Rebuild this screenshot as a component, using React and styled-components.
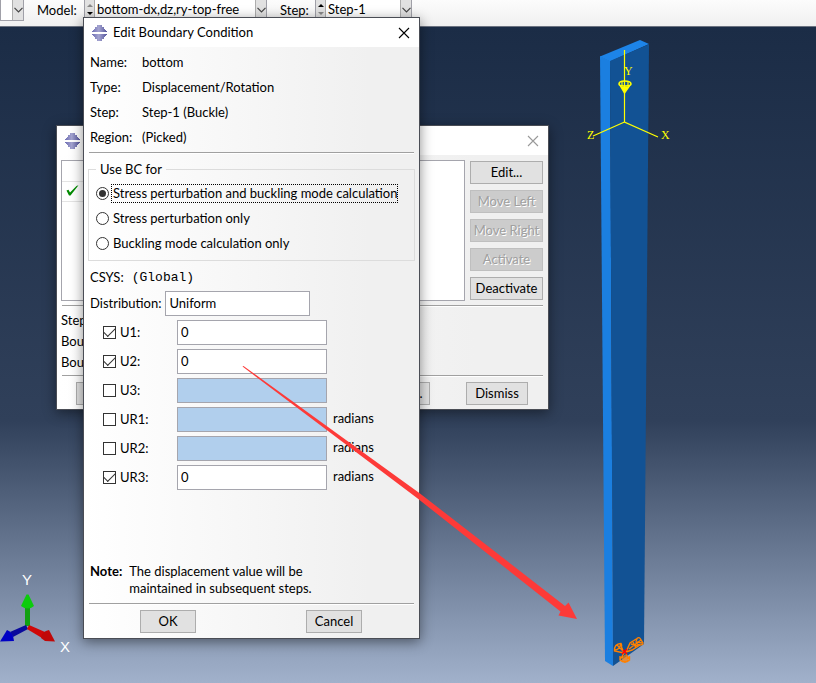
import React from "react";
import styled, { createGlobalStyle } from "styled-components";

const GlobalStyle = createGlobalStyle`
  * {
    box-sizing: border-box;
  }

  body {
    margin: 0;
    font-family: Lato, "Open Sans", sans-serif;
    font-size: 13px;
    line-height: 17px;
    color: #000;
  }

  button, input, select {
    font: inherit;
    color: inherit;
    border-radius: 0;
  }
`;

const Desktop = styled.div`
  position: relative;
  display: flex;
  flex-direction: column;
  min-height: 100vh;
  overflow: hidden;
`;

/* ---------- context bar ---------- */

const ContextBar = styled.header`
  display: flex;
  align-items: flex-start;
  height: 27px;
  background: linear-gradient(#fcfcfc, #f0f0f0);
  border-bottom: 1px solid #6b7280;
`;

const BarGroup = styled.div`
  display: flex;
  align-items: center;
  height: 22px;
  margin-top: -1px;
`;

const BarLabel = styled.label`
  width: ${({ $width }) => $width}px;
  padding-left: 13px;
`;

const Combo = styled.div`
  display: flex;
  align-items: stretch;
  width: ${({ $width }) => $width}px;
  height: 22px;
  background: #fff;
  border: 1px solid #a0a0a8;
  border-top: 0;
`;

const ComboSelect = styled.select`
  flex: 1;
  min-width: 0;
  padding: 0 2px;
  appearance: none;
  background: transparent;
  border: 0;
`;

const ComboArrow = styled.span`
  display: flex;
  align-items: center;
  justify-content: center;
  width: 11px;
  background: #e1e1e1;
  border-left: 1px solid #adadad;
`;

const Spinner = styled.span`
  display: flex;
  flex-direction: column;
  align-items: center;
  justify-content: space-evenly;
  width: 10px;
  background: #e1e1e1;
  border-right: 1px solid #adadad;
`;

/* ---------- viewport ---------- */

const Viewport = styled.main`
  flex: 1;
  background: linear-gradient(#1b2c46, #30405a 60%, #a1b1cb);
`;

const Drawing = styled.svg`
  position: absolute;
  left: ${({ $x }) => $x}px;
  top: ${({ $y }) => $y}px;
  pointer-events: none;
`;

/* ---------- windows ---------- */

const Window = styled.section`
  position: absolute;
  left: ${({ $x }) => $x}px;
  top: ${({ $y }) => $y}px;
  width: ${({ $width }) => $width}px;
  border: 1px solid #4a4d55;
  background: linear-gradient(90deg, #fff, #f0f0f0 85%);
  box-shadow: 0 3px 12px rgba(0, 0, 0, 0.45);
`;

const TitleBar = styled.div`
  display: flex;
  align-items: center;
  gap: 6px;
  height: 29px;
  padding: 0 8px;
  background: #fff;
`;

const Title = styled.h1`
  flex: 1;
  margin: 0;
  font-size: 13px;
  font-weight: 400;
`;

const CloseButton = styled.button`
  display: flex;
  padding: 1px;
  color: ${({ $dim }) => ($dim ? "#999" : "#000")};
  background: none;
  border: 0;
`;

const WindowBody = styled.div`
  padding: 5px 4px 4px;
`;

const Divider = styled.hr`
  height: 2px;
  margin: 0 1px;
  border: 0;
  border-top: 1px solid #a0a0a0;
  border-bottom: 1px solid #fff;
`;

const PushButton = styled.button`
  width: ${({ $width }) => ($width ? `${$width}px` : "100%")};
  height: 23px;
  padding: 0;
  white-space: nowrap;
  background: #e1e1e1;
  border: 1px solid #adadad;

  &:disabled {
    color: #a0a0a0;
    text-shadow: 1px 1px 0 #fff;
    background: #ccc;
    border-color: #bfbfbf;
  }
`;

/* ---------- manager window ---------- */

const ManagerMain = styled.div`
  display: flex;
  gap: 5px;
  margin-bottom: 4px;
`;

const ListFrame = styled.div`
  flex: 1;
  height: 141px;
  background: #fff;
  border: 1px solid #a5a5ad;
`;

const StatusTable = styled.table`
  border-collapse: collapse;

  td {
    width: 21px;
    height: 20px;
    padding: 0;
    text-align: center;
    border-right: 1px solid #e4e4e4;
    border-bottom: 1px solid #e4e4e4;
  }
`;

const ButtonColumn = styled.div`
  display: flex;
  flex-direction: column;
  gap: 6px;
  width: 73px;
  padding-top: 1px;
  margin-right: 1px;
`;

const StatusLines = styled.div`
  padding: 3px 0 2px;
  line-height: 21px;
`;

const ManagerButtons = styled.div`
  display: flex;
  gap: 36px;
  padding: 5px 16px 0 15px;

  button:first-child {
    margin-right: auto;
  }
`;

/* ---------- edit window ---------- */

const Facts = styled.dl`
  display: grid;
  grid-template-columns: 52px 1fr;
  margin: 0 0 2px 2px;
  line-height: 25px;

  dt,
  dd {
    margin: 0;
  }
`;

const EditBody = styled.div`
  padding: 3px 4px 5px;
`;

const Group = styled.fieldset`
  min-width: 0;
  margin: 7px 0 3px;
  padding: 3px 7px 4px;
  border: 1px solid #dcdcdc;

  legend {
    padding: 0 4px;
  }
`;

const Option = styled.label`
  display: flex;
  align-items: center;
  gap: 2px;
  height: 25px;
  white-space: nowrap;
`;

const OptionText = styled.span`
  padding-left: 1px;
  border: 1px dotted ${({ $focused }) => ($focused ? "#000" : "transparent")};
`;

const Radio = styled.input`
  display: flex;
  align-items: center;
  justify-content: center;
  flex: none;
  width: 13px;
  height: 13px;
  margin: 0;
  appearance: none;
  background: #fff;
  border: 1px solid #333;
  border-radius: 50%;

  &:checked::after {
    content: "";
    width: 7px;
    height: 7px;
    background: #333;
    border-radius: 50%;
  }
`;

const Check = styled.input`
  display: flex;
  justify-content: center;
  flex: none;
  width: 13px;
  height: 13px;
  margin: 0;
  appearance: none;
  background: #fff;
  border: 1px solid #333;

  &:checked::after {
    content: "";
    width: 10px;
    height: 5px;
    margin-top: 1px;
    border: solid #333;
    border-width: 0 0 1px 1px;
    transform: rotate(-45deg);
  }
`;

const Csys = styled.p`
  display: flex;
  gap: 8px;
  margin: 0 0 0 2px;
  line-height: 27px;

  code {
    font-family: "Liberation Mono", monospace;
    font-size: 13px;
  }
`;

const TextBox = styled.input`
  width: ${({ $width }) => $width}px;
  height: 25px;
  padding: 0 3px 1px;
  background: #fff;
  border: 1px solid #a5a5ad;

  &:disabled {
    background: #b1cfed;
  }
`;

const Distribution = styled.div`
  display: flex;
  align-items: center;
  gap: 4px;
  margin: 0 0 4px 2px;
`;

const DofList = styled.div`
  display: grid;
  gap: 4px;
  margin-left: 15px;
`;

const DofRow = styled.div`
  display: grid;
  grid-template-columns: 74px 150px 1fr;
  align-items: center;

  label {
    display: flex;
    align-items: center;
    gap: 4px;
  }
`;

const Unit = styled.span`
  padding: 0 0 3px 6px;
`;

const Note = styled.div`
  display: flex;
  gap: 7px;
  margin: 73px 0 6px 2px;

  p {
    margin: 0;
    max-width: 200px;
  }
`;

const EditButtons = styled.div`
  display: flex;
  justify-content: space-between;
  padding: 5px 53px 0 52px;
`;

/* ---------- small drawings ---------- */

const ChevronDown = () => (
  <svg width="9" height="6" viewBox="0 0 9 6" fill="none" stroke="#444" strokeWidth="1.2">
    <path d="M0.5 0.8 L4.5 4.8 L8.5 0.8" />
  </svg>
);

const Triangle = ({ down, dim }) => (
  <svg width="6" height="3" viewBox="0 0 6 3" fill={dim ? "#888" : "#000"}>
    <path d={down ? "M0 0 H6 L3 3 Z" : "M0 3 H6 L3 0 Z"} />
  </svg>
);

const Cross = () => (
  <svg width="12" height="12" viewBox="0 0 12 12" fill="none" stroke="currentColor">
    <path d="M1 1 L11 11 M11 1 L1 11" strokeWidth="1.1" />
  </svg>
);

const AppIcon = () => (
  <svg width="15" height="16" viewBox="0 0 15 16">
    <defs>
      <linearGradient id="appIcon">
        <stop offset="0" stopColor="#6f6fb4" />
        <stop offset="0.45" stopColor="#a4a4d0" />
        <stop offset="1" stopColor="#55559c" />
      </linearGradient>
    </defs>
    <g fill="url(#appIcon)">
      <path d="M5 0 H10 V2 H12 V4 H13 V5 H14 V6 H15 V7 H0 V6 H1 V5 H2 V4 H3 V2 H5 Z" />
      <path d="M0 9 H15 V10 H14 V11 H13 V12 H12 V14 H10 V16 H5 V14 H3 V12 H2 V11 H1 V10 H0 Z" />
    </g>
  </svg>
);

const GreenTick = () => (
  <svg width="13" height="11" viewBox="0 0 13 11" fill="#008a00">
    <path d="M0.5 5.5 L2.5 4.8 L4 7.5 L10.5 1 L12.5 0.3 L4.5 10.5 H3 Z" />
  </svg>
);

const Beam = () => (
  <Drawing $x={580} $y={36} width="100" height="640" viewBox="580 36 100 640">
    <path d="M600 56 L610 61 L613 666 L605 661 Z" fill="#1b7fe0" />
    <path d="M600 56.5 L640 40 L649 44 L610 61.5 Z" fill="#1d84e8" />
    <path d="M610 61 L649 44.3 L644 644 L613 666 Z" fill="#125294" />
    <g fill="none" stroke="#ff0" strokeWidth="1.2">
      <path d="M624.5 50 V122 L658 137 M624.5 122 L593 136" />
      <path d="M619 84 Q619 81 624.5 81 Q631 81 631 84 Q631 86 624.5 86 Q619 86 619 84" strokeWidth="1.6" />
      <path d="M622 82 V86 M628 82 V86" />
    </g>
    <path d="M619 85 Q624.5 88 631 85 L625 93.5 H624 Z" fill="#ff0" />
    <g fill="#ff0" fontFamily="Liberation Serif, serif" fontSize="12">
      <text x="624" y="75">Y</text>
      <text x="587" y="139">Z</text>
      <text x="661" y="139">X</text>
    </g>
    <g fill="none" stroke="#ff8000" strokeWidth="1.4">
      <path d="M624 653 L614.5 651 Q614 644 621 643.5 Q622 645 621.5 647 L624 653 M617 645 L623 651 M615 650 Q619 650 621 644" />
      <path d="M624 653 L620 660 Q625 664 629.5 660 L626 654 M620 656 V660 M629.5 656 V660 M625 655 V663 M623 656 V662 M627 656 V662" />
      <path d="M626 652 L630 643 L637 638.5 Q639 636.5 640.5 639 L643 643 Q643 645 640 645 L632 650 Z" />
      <path d="M629 649 L641 640 M631 644 L638 646 M633 642 L636 648 M637 639 Q634 644 640 645 M637 642 L642 643" />
    </g>
    <path d="M623 650 L627 654 M627 649 L622 654" stroke="#f00" strokeWidth="1.6" />
  </Drawing>
);

const Triad = () => (
  <Drawing $x={0} $y={568} width="80" height="92" viewBox="0 568 80 92">
    <path d="M25 626 V606 H30 V626 Z" fill="#12a012" />
    <path d="M21 606 L26.5 594.5 H28.5 L34 606 Q28 611 21 606 Z" fill="#0ccc0c" />
    <path d="M26 625 L28 629 L13 637 L10 632 Z" fill="#0a0a9c" />
    <path d="M0 641.5 L7 630 Q13 632 14 641 Z" fill="#0000c4" />
    <path d="M29 625 L45 632 L42 638 L27 629 Z" fill="#d00808" />
    <path d="M55 641.5 L49 630 Q42 631 41 638 L45 641 Z" fill="#c00808" />
    <g fill="#fff" fontFamily="Liberation Sans, sans-serif" fontSize="15">
      <text x="22" y="585">Y</text>
      <text x="60" y="652">X</text>
    </g>
  </Drawing>
);

const Pointer = () => (
  <Drawing $x={240} $y={364} width="340" height="258" viewBox="240 364 340 258">
    <path
      d="M242.5 366.5 L243.5 366 L420 493.5 L565 606 L568.5 602.5 L577 619 L558.5 615.5 L560.5 611.5 L417 498 Z"
      fill="#fd3a38"
    />
  </Drawing>
);

/* ---------- data ---------- */

const facts = [
  { term: "Name:", value: "bottom" },
  { term: "Type:", value: "Displacement/Rotation" },
  { term: "Step:", value: "Step-1 (Buckle)" },
  { term: "Region:", value: "(Picked)" },
];

const useOptions = [
  "Stress perturbation and buckling mode calculation",
  "Stress perturbation only",
  "Buckling mode calculation only",
];

const dofs = [
  { name: "U1", on: true },
  { name: "U2", on: true },
  { name: "U3" },
  { name: "UR1", unit: "radians" },
  { name: "UR2", unit: "radians" },
  { name: "UR3", on: true, unit: "radians" },
];

const sideButtons = [
  { text: "Edit..." },
  { text: "Move Left", disabled: true },
  { text: "Move Right", disabled: true },
  { text: "Activate", disabled: true },
  { text: "Deactivate" },
];

const managerButtons = ["Create...", "Delete...", "Dismiss"];

const ManagerWindow = () => (
  <Window $x={56} $y={125} $width={493} aria-label="Boundary Condition Manager">
    <TitleBar>
      <AppIcon />
      <Title />
      <CloseButton $dim aria-label="Close manager">
        <Cross />
      </CloseButton>
    </TitleBar>
    <WindowBody>
      <ManagerMain>
        <ListFrame>
          <StatusTable>
            <tbody>
              <tr>
                <td />
              </tr>
              <tr>
                <td>
                  <GreenTick />
                </td>
              </tr>
            </tbody>
          </StatusTable>
        </ListFrame>
        <ButtonColumn>
          {sideButtons.map((item) => (
            <PushButton key={item.text} disabled={item.disabled}>
              {item.text}
            </PushButton>
          ))}
        </ButtonColumn>
      </ManagerMain>
      <Divider />
      <StatusLines>
        <div>Step</div>
        <div>Bou</div>
        <div>Bou</div>
      </StatusLines>
      <Divider />
      <ManagerButtons>
        {managerButtons.map((text) => (
          <PushButton key={text} $width={62}>
            {text}
          </PushButton>
        ))}
      </ManagerButtons>
    </WindowBody>
  </Window>
);

const EditWindow = () => (
  <Window $x={83} $y={17} $width={337}>
    <TitleBar>
      <AppIcon />
      <Title>Edit Boundary Condition</Title>
      <CloseButton aria-label="Close">
        <Cross />
      </CloseButton>
    </TitleBar>
    <EditBody>
      <Facts>
        {facts.map(({ term, value }) => (
          <React.Fragment key={term}>
            <dt>{term}</dt>
            <dd>{value}</dd>
          </React.Fragment>
        ))}
      </Facts>
      <Divider />
      <Group>
        <legend>Use BC for</legend>
        {useOptions.map((text, index) => (
          <Option key={text}>
            <Radio type="radio" name="useBc" defaultChecked={index === 0} />
            <OptionText $focused={index === 0}>{text}</OptionText>
          </Option>
        ))}
      </Group>
      <Csys>
        CSYS: <code>(Global)</code>
      </Csys>
      <Distribution>
        <label htmlFor="distribution">Distribution:</label>
        <TextBox id="distribution" $width={145} defaultValue="Uniform" />
      </Distribution>
      <DofList>
        {dofs.map(({ name, on, unit }) => (
          <DofRow key={name}>
            <label>
              <Check type="checkbox" defaultChecked={on} />
              {name}:
            </label>
            <TextBox
              $width={150}
              aria-label={name}
              disabled={!on}
              defaultValue={on ? "0" : ""}
            />
            {unit && <Unit>{unit}</Unit>}
          </DofRow>
        ))}
      </DofList>
      <Note>
        <strong>Note:</strong>
        <p>The displacement value will be maintained in subsequent steps.</p>
      </Note>
      <Divider />
      <EditButtons>
        <PushButton $width={56}>OK</PushButton>
        <PushButton $width={56}>Cancel</PushButton>
      </EditButtons>
    </EditBody>
  </Window>
);

const App = () => {
  return (
    <>
      <GlobalStyle />
      <Desktop>
        <ContextBar>
          <BarGroup>
            <Combo $width={24}>
              <ComboSelect aria-label="Module" />
              <ComboArrow>
                <ChevronDown />
              </ComboArrow>
            </Combo>
            <BarLabel htmlFor="model" $width={60}>
              Model:
            </BarLabel>
            <Combo $width={183}>
              <Spinner>
                <Triangle dim />
                <Triangle down />
              </Spinner>
              <ComboSelect id="model">
                <option>bottom-dx,dz,ry-top-free</option>
              </ComboSelect>
              <ComboArrow>
                <ChevronDown />
              </ComboArrow>
            </Combo>
            <BarLabel htmlFor="step" $width={48}>
              Step:
            </BarLabel>
            <Combo $width={97}>
              <Spinner>
                <Triangle />
                <Triangle down dim />
              </Spinner>
              <ComboSelect id="step">
                <option>Step-1</option>
              </ComboSelect>
              <ComboArrow>
                <ChevronDown />
              </ComboArrow>
            </Combo>
          </BarGroup>
        </ContextBar>
        <Viewport>
          <Beam />
          <Triad />
        </Viewport>
        <ManagerWindow />
        <EditWindow />
        <Pointer />
      </Desktop>
    </>
  );
};

export default App;
